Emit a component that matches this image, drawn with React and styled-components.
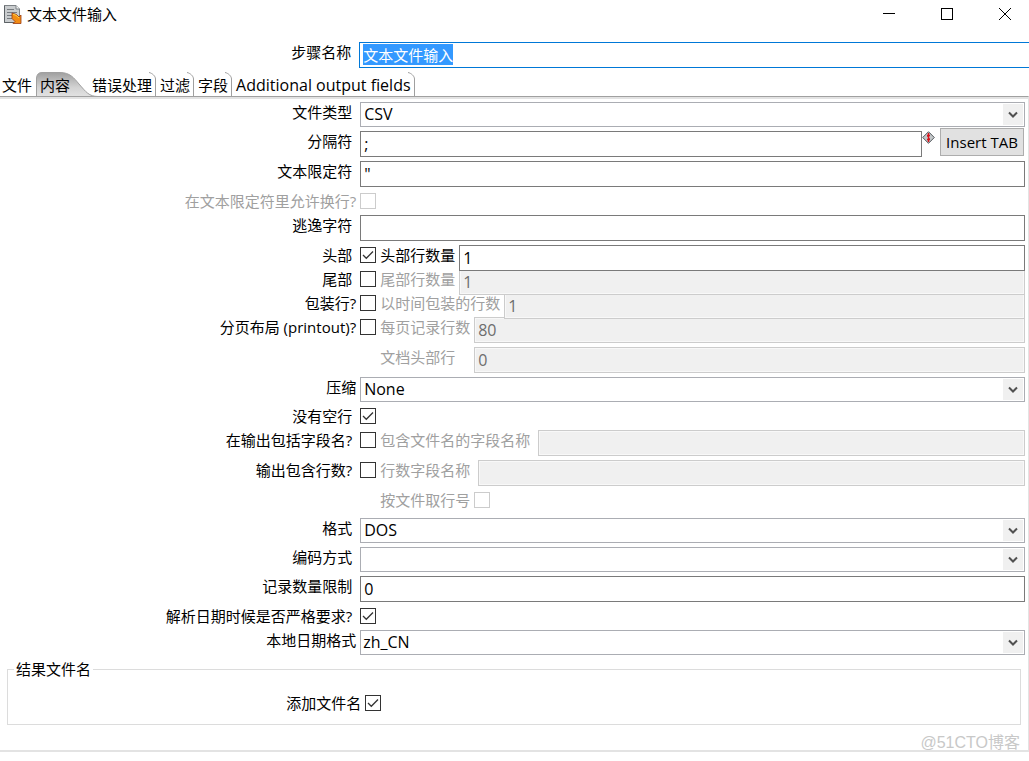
import React, { useEffect, useId, useRef } from "react";
import styled, { createGlobalStyle } from "styled-components";

const GlobalStyle = createGlobalStyle`
  * { box-sizing: border-box; }
  body {
    margin: 0;
    background: #fff;
    color: #000;
    font: 15px/20px "Open Sans", "Noto Sans CJK SC", sans-serif;
  }
  button, input, select { font: inherit; color: inherit; margin: 0; }
`;

const Window = styled.main`
  display: flex;
  flex-direction: column;
  padding-bottom: 9px;
`;

const TitleBar = styled.header`
  display: flex;
  align-items: center;
  height: 28px;
  padding-left: 4px;
`;

const Title = styled.h1`
  flex: 1;
  margin: 0 0 0 5px;
  font-size: 15px;
  font-weight: 400;
`;

const WindowButtons = styled.div`
  display: flex;
  gap: 10px;
`;

const WindowButton = styled.button`
  display: grid;
  place-items: center;
  width: 48px;
  height: 28px;
  padding: 0;
  border: 0;
  background: none;
`;

const StepRow = styled.div`
  display: flex;
  margin-top: 14px;
  height: 30px;
`;

const StepLabel = styled.label`
  flex: 0 0 calc(35% - 1px);
  padding-right: 8px;
  text-align: right;
`;

const StepInput = styled.input`
  flex: 1;
  min-width: 0;
  height: 26px;
  padding: 0 3px 1px;
  border: 1px solid #0078d7;
  border-right: 0;
  border-radius: 0;
  outline: none;
  caret-color: transparent;
  &::selection { background: #3399ff; color: #fff; }
`;

const TabBar = styled.div`
  display: flex;
  height: 24px;
`;

const TabButton = styled.button`
  position: relative;
  height: 24px;
  padding: 2px 4px 0 ${(p) => (p.$first ? 2 : 4)}px;
  padding-right: ${(p) => (p.$selected ? 18 : 4)}px;
  border: 0;
  background: none;
  white-space: nowrap;
  font-size: ${(p) => (p.$latin ? 16 : 15)}px;
  line-height: 20px;
`;

const TabText = styled.span`
  position: relative;
`;

const TabShape = styled.svg`
  position: absolute;
  top: 0;
  left: 0;
`;

const TabEdge = styled.svg`
  position: absolute;
  top: 0;
  right: 0;
`;

const Panel = styled.section`
  position: relative;
  display: flex;
  flex-direction: column;
  gap: 4px;
  padding: 5px 3px 25px 0;
  border-top: 1px solid #a0a0a0;
  border-right: 1px solid #e3e3e3;
  border-bottom: 2px solid #e3e3e3;
  box-shadow: inset 0 2px #e3e3e3;
`;

const Row = styled.div`
  position: relative;
  z-index: ${(p) => p.$layer || 0};
  display: flex;
  align-items: flex-start;
  height: ${(p) => p.$height}px;
`;

const Label = styled.label`
  flex: 0 0 35vw;
  padding-right: ${(p) => (p.$near ? 4 : 8)}px;
  text-align: right;
  white-space: nowrap;
  color: ${(p) => (p.$disabled ? "#a0a0a0" : "#000")};
`;

const SubLabel = styled.label`
  flex: none;
  min-width: ${(p) => (p.$wide ? 90 : 0)}px;
  margin-left: ${(p) => (p.$indent ? 20 : 4)}px;
  margin-right: ${(p) => (p.$far ? 8 : 4)}px;
  white-space: nowrap;
  color: ${(p) => (p.$disabled ? "#a0a0a0" : "#000")};
`;

const TextInput = styled.input`
  flex: 1;
  min-width: 0;
  height: 26px;
  padding: 0 3px;
  border: 1px solid #7a7a7a;
  border-radius: 0;
  outline: none;
  background: #fff;
  font-size: 16px;
  &:disabled {
    border-color: #ccc;
    background: #f0f0f0;
    box-shadow: inset 0 0 0 1px #f8f8f8;
    color: #6d6d6d;
  }
`;

const SelectBox = styled.div`
  position: relative;
  flex: 1;
  height: 25px;
`;

const Select = styled.select`
  display: block;
  appearance: none;
  width: 100%;
  height: 25px;
  padding: 0 24px 1px ${(p) => (p.$tight ? 2 : 3)}px;
  border: 1px solid #abadb3;
  border-radius: 0;
  background: #fff;
  font-size: 16px;
`;

const SelectArrow = styled.span`
  position: absolute;
  top: 2px;
  right: 2px;
  display: grid;
  place-items: center;
  width: 20px;
  height: 21px;
  background: #f0f0f0;
  pointer-events: none;
`;

const CheckInput = styled.input`
  appearance: none;
  display: block;
  width: 16px;
  height: 16px;
  margin-top: 2px;
  border: 1px solid #333;
  background: #fff;
  &:disabled { border-color: #ccc; }
`;

const CheckBox = styled.span`
  position: relative;
  flex: none;
  height: 20px;
`;

const CheckMark = styled.svg`
  position: absolute;
  left: 0;
  top: 2px;
  pointer-events: none;
  display: none;
  ${CheckInput}:checked + & { display: block; }
`;

const VariableIcon = styled.svg`
  flex: none;
  margin-right: 5px;
`;

const InsertButton = styled.button`
  flex: none;
  width: 84px;
  height: 28px;
  margin: -3px 1px 0 0;
  padding: 0;
  border: 1px solid #adadad;
  background: #e1e1e1;
  white-space: nowrap;
`;

const Group = styled.fieldset`
  min-width: 0;
  height: 66px;
  margin: 0 4px 0 7px;
  padding: 14px 0 0;
  border: 1px solid #dcdcdc;
`;

const Legend = styled.legend`
  margin-left: 6px;
  padding: 0 2px;
  height: 20px;
`;

const GroupRow = styled.div`
  display: flex;
`;

const GroupLabel = styled.label`
  flex: 0 0 calc(35vw - 3px);
  padding-right: 4px;
  text-align: right;
`;

const Watermark = styled.span`
  position: absolute;
  right: 8px;
  bottom: -5px;
  font: 16px/24px "Liberation Sans", "Noto Sans CJK SC", sans-serif;
  color: #c8c8c8;
`;

function Check({ id, checked, disabled }) {
  return (
    <CheckBox>
      <CheckInput type="checkbox" id={id} defaultChecked={checked} disabled={disabled} />
      <CheckMark width="16" height="16" viewBox="0 0 16 16" fill="none" stroke="#333" strokeWidth="1.3">
        <path d="M3 8 L6.3 11.3 L13 4.5" />
      </CheckMark>
    </CheckBox>
  );
}

function Combo({ id, value, tight }) {
  return (
    <SelectBox>
      <Select id={id} defaultValue={value} $tight={tight}>
        <option value={value}>{value}</option>
      </Select>
      <SelectArrow>
        <svg width="10" height="8" viewBox="0 0 10 8" fill="none" stroke="#505050" strokeWidth="2">
          <path d="M1 1.5 L5 5.5 L9 1.5" />
        </svg>
      </SelectArrow>
    </SelectBox>
  );
}

function ComboRow({ label, value, near, tight }) {
  const id = useId();
  return (
    <Row $height={25}>
      <Label htmlFor={id} $near={near}>{label}</Label>
      <Combo id={id} value={value} tight={tight} />
    </Row>
  );
}

function InputRow({ label, value, children }) {
  const id = useId();
  return (
    <Row $height={26}>
      <Label htmlFor={id}>{label}</Label>
      <TextInput id={id} defaultValue={value} />
      {children}
    </Row>
  );
}

function CheckRow({ label, checked, disabled, near }) {
  const id = useId();
  return (
    <Row $height={20}>
      <Label htmlFor={id} $near={near} $disabled={disabled}>{label}</Label>
      <Check id={id} checked={checked} disabled={disabled} />
    </Row>
  );
}

function CheckInputRow({ label, checked, near, sub, value, far, height = 20, layer }) {
  const id = useId();
  const subId = useId();
  return (
    <Row $height={height} $layer={layer}>
      <Label htmlFor={id} $near={near}>{label}</Label>
      <Check id={id} checked={checked} />
      <SubLabel htmlFor={subId} $disabled={!checked} $far={far}>{sub}</SubLabel>
      <TextInput id={subId} defaultValue={value} disabled={!checked} />
    </Row>
  );
}

function Tab({ children, first, selected, latin }) {
  return (
    <TabButton type="button" role="tab" aria-selected={!!selected} $first={first} $selected={selected} $latin={latin}>
      {selected && (
        <TabShape width="64" height="25" viewBox="0 0 64 25">
          <defs>
            <linearGradient id="tabFill" x1="0" y1="0" x2="0" y2="1">
              <stop offset="0" stopColor="#a0a0a0" />
              <stop offset="0.6" stopColor="#d2d2d2" />
              <stop offset="1" stopColor="#e3e3e3" />
            </linearGradient>
          </defs>
          <path d="M0.5 25 V6 Q1 0.5 6 0.5 H24 C34 0.5 38 6 43 12 C50 20 53 24.5 62 24.5 V25 Z" fill="url(#tabFill)" />
          <path d="M0.5 25 V6 Q1 0.5 6 0.5 H24 C34 0.5 38 6 43 12 C50 20 53 24.5 62 24.5" fill="none" stroke="#a0a0a0" />
        </TabShape>
      )}
      <TabText>{children}</TabText>
      {!first && !selected && (
        <TabEdge width="8" height="24" viewBox="0 0 8 24" fill="none" stroke="#a0a0a0">
          <path d="M1 0.5 C4 1 7.5 4 7.5 7 V24" />
        </TabEdge>
      )}
    </TabButton>
  );
}

function StepName() {
  const ref = useRef(null);
  useEffect(() => {
    ref.current.focus();
    ref.current.select();
  }, []);
  return (
    <StepRow>
      <StepLabel htmlFor="step-name">步骤名称</StepLabel>
      <StepInput id="step-name" ref={ref} defaultValue="文本文件输入" />
    </StepRow>
  );
}

export default function App() {
  return (
    <Window>
      <GlobalStyle />
      <TitleBar>
        <svg width="18" height="19" viewBox="0 0 18 19">
          <path d="M0.5 0.5 H12 L15.5 4 V17.5 H0.5 Z" fill="#c9ccce" stroke="#7d8286" />
          <path d="M0.5 0.5 V17.5 H15.5" fill="none" stroke="#5d6266" />
          <path d="M12 0.5 V4 H15.5" fill="#f4f5f5" stroke="#7d8286" />
          <path d="M3 4.5 H10 M3 7.5 H13 M3 10.5 H8 M3 13.5 H8" stroke="#777c80" />
          <path d="M8 8 L12.5 9.5 L15 12 L17 10 V18.5 H9 L11 16.5 L8 13.5 Z" fill="#f28c14" stroke="#9b3a10" strokeWidth="0.8" />
          <path d="M9 9.2 L12 10.3 L15 13" fill="none" stroke="#ffd13c" />
        </svg>
        <Title>文本文件输入</Title>
        <WindowButtons>
          <WindowButton type="button" aria-label="最小化">
            <svg width="12" height="12" stroke="#000"><path d="M0 5.5 H12" /></svg>
          </WindowButton>
          <WindowButton type="button" aria-label="最大化">
            <svg width="12" height="12" stroke="#000" fill="none"><rect x="0.5" y="0.5" width="11" height="11" /></svg>
          </WindowButton>
          <WindowButton type="button" aria-label="关闭">
            <svg width="12" height="12" stroke="#000"><path d="M0 0 L12 12 M12 0 L0 12" /></svg>
          </WindowButton>
        </WindowButtons>
      </TitleBar>
      <StepName />
      <TabBar role="tablist">
        <Tab first>文件</Tab>
        <Tab selected>内容</Tab>
        <Tab>错误处理</Tab>
        <Tab>过滤</Tab>
        <Tab>字段</Tab>
        <Tab latin>Additional output fields</Tab>
      </TabBar>
      <Panel>
        <ComboRow label="文件类型" value="CSV" />
        <InputRow label="分隔符" value=";">
          <VariableIcon width="13" height="13" viewBox="0 0 13 13">
            <path d="M6.5 0.7 L12.3 6.5 L6.5 12.3 L0.7 6.5 Z" fill="#c3c7c9" stroke="#50565a" />
            <path d="M6.5 2 V11 M5 4.5 H8 M5 8.5 H8" fill="none" stroke="#d8141c" strokeWidth="1.4" />
            <path d="M5.5 5 L7.5 8" fill="none" stroke="#d8141c" />
          </VariableIcon>
          <InsertButton type="button">Insert TAB</InsertButton>
        </InputRow>
        <InputRow label="文本限定符" value={'"'} />
        <CheckRow label="在文本限定符里允许换行?" near disabled />
        <InputRow label="逃逸字符" value="" />
        <CheckInputRow label="头部" checked sub="头部行数量" value="1" layer={3} />
        <CheckInputRow label="尾部" sub="尾部行数量" value="1" layer={2} />
        <CheckInputRow label="包装行?" near sub="以时间包装的行数" value="1" layer={1} />
        <CheckInputRow label="分页布局 (printout)?" near sub="每页记录行数" value="80" height={26} />
        <Row $height={26}>
          <Label as="span" />
          <SubLabel htmlFor="doc-header" $indent $wide $disabled>文档头部行</SubLabel>
          <TextInput id="doc-header" defaultValue="0" disabled />
        </Row>
        <ComboRow label="压缩" value="None" near />
        <CheckRow label="没有空行" checked />
        <CheckInputRow label="在输出包括字段名?" sub="包含文件名的字段名称" value="" far height={26} />
        <CheckInputRow label="输出包含行数?" sub="行数字段名称" value="" far height={26} />
        <Row $height={24}>
          <Label as="span" />
          <SubLabel htmlFor="row-by-file" $indent $disabled>按文件取行号</SubLabel>
          <Check id="row-by-file" disabled />
        </Row>
        <ComboRow label="格式" value="DOS" />
        <ComboRow label="编码方式" value="" />
        <InputRow label="记录数量限制" value="0" />
        <CheckRow label="解析日期时候是否严格要求?" checked />
        <ComboRow label="本地日期格式" value="zh_CN" near tight />
        <Group>
          <Legend>结果文件名</Legend>
          <GroupRow>
            <GroupLabel htmlFor="add-file">添加文件名</GroupLabel>
            <Check id="add-file" checked />
          </GroupRow>
        </Group>
        <Watermark>@51CTO博客</Watermark>
      </Panel>
    </Window>
  );
}
